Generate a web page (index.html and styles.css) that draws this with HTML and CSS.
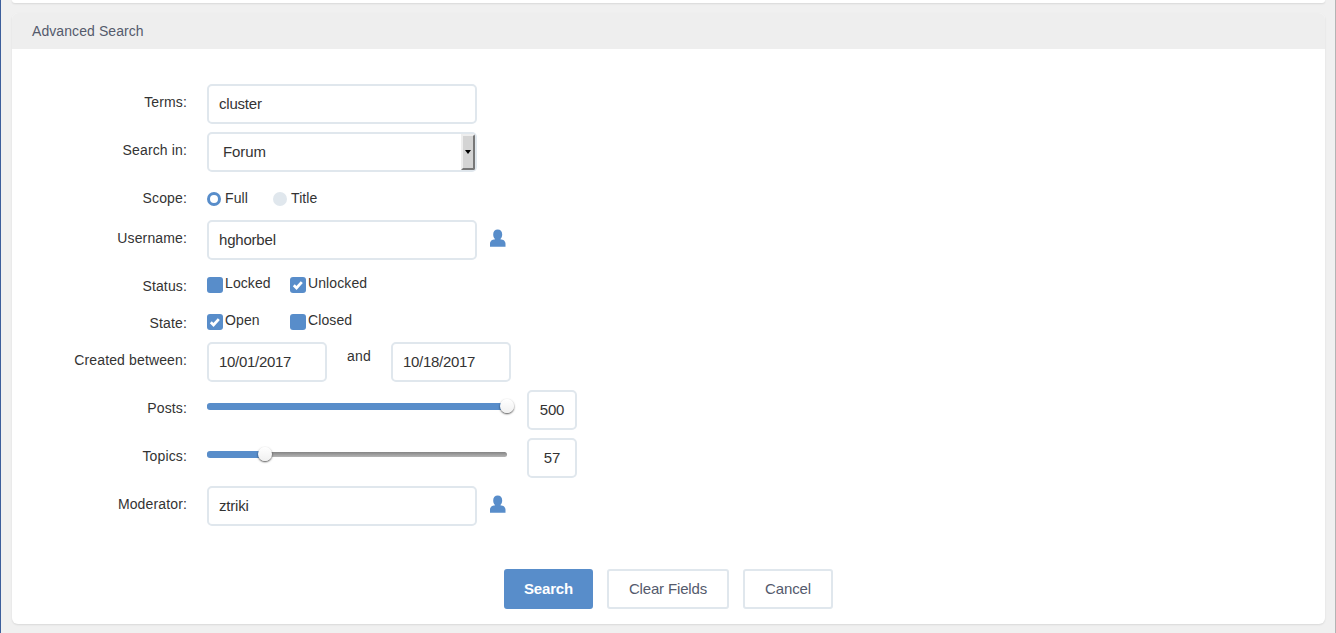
FILE: index.html
```html
<!DOCTYPE html>
<html lang="en">
<head>
    <meta charset="UTF-8">
    <meta name="viewport" content="width=device-width, initial-scale=1.0">
    <title>Advanced Search</title>
    <link rel="stylesheet" href="styles.css">
</head>
<body>

<svg class="symbols" width="0" height="0">
    <symbol id="user" viewBox="0 0 16 18">
        <path d="M7.700.5c2.700 0 4.500 1.700 4.500 4.700 0 2-.6 3.600-1.600 4.600v.6c2.700.1 4.900 1.300 4.900 4.300v3.100H0v-3.100c0-3 2.200-4.200 4.800-4.300v-.6c-1-1-1.600-2.600-1.600-4.600C3.200 2.200 5 .5 7.700.5z"/>
    </symbol>
</svg>

<div class="page">
    <div class="panel-above"></div>

    <div class="panel">
        <h2 class="panel-title">Advanced Search</h2>

        <form class="search-form">
            <div class="row">
                <label class="name" for="terms">Terms:</label>
                <input class="field" type="text" id="terms" value="cluster">
            </div>
            <div class="row">
                <label class="name">Search in:</label>
                <div class="field select">
                    <span>Forum</span>
                    <span class="select-arrow"></span>
                </div>
            </div>
            <div class="row row-scope">
                <label class="name">Scope:</label>
                <label class="option option-scope"><span class="radio checked"></span><span>Full</span></label>
                <label class="option"><span class="radio"></span><span>Title</span></label>
            </div>
            <div class="row">
                <label class="name" for="username">Username:</label>
                <input class="field" type="text" id="username" value="hghorbel">
                <svg class="user-icon"><use href="#user"/></svg>
            </div>
            <div class="row row-check">
                <label class="name">Status:</label>
                <label class="option option-check"><span class="checkbox"></span><span>Locked</span></label>
                <label class="option option-check"><span class="checkbox"><svg viewBox="0 0 16 16"><path d="M3.800 8.300l2.700 2.600 5.300-5.800"/></svg></span><span>Unlocked</span></label>
            </div>
            <div class="row row-check">
                <label class="name">State:</label>
                <label class="option option-check"><span class="checkbox"><svg viewBox="0 0 16 16"><path d="M3.800 8.300l2.700 2.600 5.300-5.800"/></svg></span><span>Open</span></label>
                <label class="option option-check"><span class="checkbox"></span><span>Closed</span></label>
            </div>
            <div class="row">
                <label class="name">Created between:</label>
                <input class="field date" type="text" value="10/01/2017">
                <span class="and">and</span>
                <input class="field date" type="text" value="10/18/2017">
            </div>
            <div class="row">
                <label class="name">Posts:</label>
                <div class="slider">
                    <div class="slider-fill" style="width: 300px"></div>
                    <div class="slider-thumb" style="left: 293px"></div>
                </div>
                <input class="field number" type="text" value="500">
            </div>
            <div class="row">
                <label class="name">Topics:</label>
                <div class="slider">
                    <div class="slider-fill" style="width: 58px"></div>
                    <div class="slider-thumb" style="left: 51px"></div>
                </div>
                <input class="field number" type="text" value="57">
            </div>
            <div class="row">
                <label class="name" for="moderator">Moderator:</label>
                <input class="field" type="text" id="moderator" value="ztriki">
                <svg class="user-icon"><use href="#user"/></svg>
            </div>

            <div class="buttons">
                <button type="button" class="btn btn-search">Search</button>
                <button type="button" class="btn btn-clear">Clear Fields</button>
                <button type="button" class="btn btn-cancel">Cancel</button>
            </div>
        </form>
    </div>
</div>

</body>
</html>
```
FILE: styles.css
```css
* {
    box-sizing: border-box;
}

body {
    margin: 0;
    background-color: #f0f0f0;
    font-family: "Liberation Sans", Arial, sans-serif;
    font-size: 14px;
    color: #333;
}

.symbols {
    display: block;
}

.page {
    height: 633px;
    padding: 0 10px 0 11px;
    border-left: 1px solid #3d5f9c;
    border-right: 1px solid #b4b4b4;
    overflow: hidden;
}

.panel-above {
    width: 1313px;
    height: 3px;
    background-color: #fff;
    border-radius: 0 0 6px 6px;
    box-shadow: 0 1px 2px rgba(0, 0, 0, 0.1);
}

.panel {
    margin-top: 10px;
    width: 1313px;
    height: 611px;
    background-color: #fff;
    border-radius: 6px;
    box-shadow: 0 1px 2px rgba(0, 0, 0, 0.1);
}

.panel-title {
    margin: 0;
    height: 36px;
    padding-left: 20px;
    background-color: #eee;
    border-radius: 6px 6px 0 0;
    font-size: 14px;
    font-weight: normal;
    line-height: 36px;
    letter-spacing: 0.08px;
    color: #545a6c;
}

.search-form {
    padding-top: 35px;
}

.row {
    display: flex;
    height: 48px;
}

.row-scope {
    height: 40px;
}

.row-check {
    height: 37px;
}

.name {
    width: 175px;
    margin-right: 20px;
    text-align: right;
    line-height: 36px;
    letter-spacing: 0.14px;
}

.field {
    width: 270px;
    height: 40px;
    padding: 0 10px 2px;
    border: 2px solid #e0e7ed;
    border-radius: 5px;
    background-color: #fff;
    font-family: inherit;
    font-size: 15px;
    letter-spacing: -0.2px;
    color: #333;
}

.select {
    display: flex;
    justify-content: space-between;
    padding: 0 0 0 14px;
    line-height: 36px;
    letter-spacing: -0.1px;
}

.select-arrow {
    display: flex;
    align-items: center;
    justify-content: center;
    width: 14px;
    background-color: #d4d4d4;
    border: 2px solid #eee;
    border-right-color: #777;
    border-bottom-color: #777;
    border-radius: 0 2px 2px 0;
}

.select-arrow::after {
    content: "";
    border: 3px solid transparent;
    border-top: 4px solid #000;
    border-bottom: none;
}

.option {
    display: flex;
    line-height: 36px;
    letter-spacing: 0.1px;
}

.option-scope {
    width: 66px;
}

.radio {
    width: 14px;
    height: 14px;
    margin: 12px 4px 0 0;
    border-radius: 50%;
    background-color: #e0e7ed;
}

.radio.checked {
    border: 3px solid #588dca;
    background-color: #fff;
}

.option-check {
    width: 83px;
    line-height: 30px;
}

.checkbox {
    width: 16px;
    height: 16px;
    margin: 9px 2px 0 0;
    border-radius: 3px;
    background-color: #588dca;
}

.checkbox svg {
    display: block;
    fill: none;
    stroke: #fff;
    stroke-width: 2.8;
}

.user-icon {
    width: 16px;
    height: 18px;
    margin: 9px 0 0 13px;
    fill: #588dca;
}

.date {
    width: 120px;
    letter-spacing: -0.3px;
}

.and {
    width: 64px;
    text-align: center;
    line-height: 28px;
    letter-spacing: 0.2px;
}

.slider {
    position: relative;
    width: 300px;
    height: 5px;
    margin: 14px 20px 0 0;
    border-radius: 3px;
    background: linear-gradient(#858585, #b5b5b5);
}

.slider-fill {
    position: absolute;
    top: -1px;
    left: 0;
    height: 7px;
    border-radius: 3px;
    background-color: #588dca;
}

.slider-thumb {
    position: absolute;
    top: -5px;
    width: 14px;
    height: 14px;
    border-radius: 50%;
    background: linear-gradient(#fff, #f0f0f0);
    box-shadow: 0 1px 2px rgba(0, 0, 0, 0.7);
}

.number {
    width: 50px;
    padding: 0 0 2px;
    text-align: center;
}

.buttons {
    display: flex;
    justify-content: center;
    gap: 14px;
    margin-top: 35px;
}

.btn {
    height: 40px;
    padding: 0 0 2px;
    border: 2px solid #e0e7ed;
    border-radius: 3px;
    background-color: #fff;
    font-family: inherit;
    font-size: 15px;
    letter-spacing: -0.15px;
    color: #545a6c;
}

.btn-search {
    width: 89px;
    border-color: #588dca;
    background-color: #588dca;
    font-weight: bold;
    color: #fff;
}

.btn-clear {
    width: 122px;
}

.btn-cancel {
    width: 90px;
}
```
